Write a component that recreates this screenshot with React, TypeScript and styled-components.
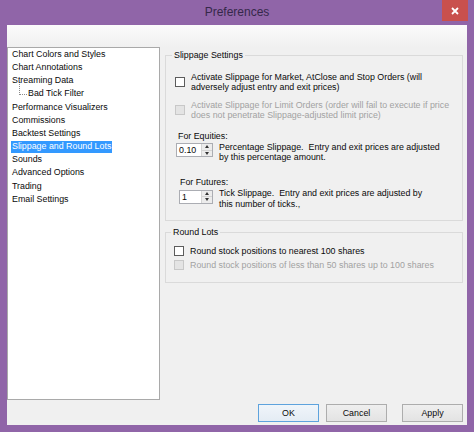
import styled, { createGlobalStyle } from "styled-components";

const GlobalStyle = createGlobalStyle`
  html, body {
    margin: 0;
    padding: 0;
    background: #9065a8;
  }
  body {
    width: 474px;
    height: 432px;
    overflow: hidden;
    font-family: "Liberation Sans", Arial, sans-serif;
    font-size: 8.85px;
    color: #0a0a0a;
  }
  #root {
    height: 100%;
  }
`;

const Window = styled.div`
  width: 474px;
  height: 432px;
  display: flex;
  flex-direction: column;
  background: #9065a8;
`;

const TitleBar = styled.div`
  height: 25px;
  flex: none;
  display: grid;
  grid-template-columns: 1fr auto 1fr;
  align-items: start;
`;

const Title = styled.div`
  grid-column: 2;
  font-size: 12px;
  line-height: 24px;
  color: #35284a;
`;

const CloseButton = styled.div`
  grid-column: 3;
  justify-self: end;
  margin-right: 6px;
  width: 26px;
  height: 21px;
  background: #c9504d;
  display: flex;
  align-items: center;
  justify-content: center;
`;

const Client = styled.div`
  flex: 1;
  margin: 0 7px 7px;
  padding-top: 22px;
  background: linear-gradient(#fbfbfb, #f0f0f0 22px);
  display: grid;
  grid-template-columns: 153px 1fr;
  grid-template-rows: 1fr 25px;
  min-height: 0;
`;

const ListBox = styled.div`
  background: #fff;
  border: 1px solid #a9a9a9;
  padding: 0 0 0 3px;
`;

const ListItem = styled.div<{ indent?: boolean }>`
  height: 13.2px;
  display: flex;
  align-items: center;
  padding-left: ${(p) => (p.indent ? "16px" : "0")};
  position: relative;
`;

const ItemLabel = styled.span<{ selected?: boolean }>`
  line-height: 11.6px;
  padding: 0 1px;
  white-space: nowrap;
  background: ${(p) => (p.selected ? "#3399ff" : "transparent")};
  color: ${(p) => (p.selected ? "#fff" : "#0a0a0a")};
`;

const TreeLine = styled.span`
  position: absolute;
  left: 8px;
  top: -4px;
  width: 7px;
  height: 10px;
  border-left: 1px dotted #8a8a8a;
  border-bottom: 1px dotted #8a8a8a;
`;

const Panel = styled.div`
  padding: 1.5px 4px 0 5px;
  display: flex;
  flex-direction: column;
`;

const GroupBox = styled.fieldset<{ pad: string }>`
  margin: 0;
  padding: ${(p) => p.pad};
  border: 1px solid #dadada;
  border-radius: 0;
  display: flex;
  flex-direction: column;
  min-width: 0;

  & + & {
    margin-top: 4.5px;
  }
`;

const Legend = styled.legend`
  margin-left: -3px;
  padding: 0 2px;
  line-height: 13px;
`;

const CheckRow = styled.label<{ gap?: number }>`
  display: flex;
  align-items: center;
  gap: 6px;
  margin-top: ${(p) => p.gap ?? 0}px;
  line-height: 10.3px;
`;

const Box = styled.span<{ disabled?: boolean }>`
  flex: none;
  width: 10px;
  height: 10px;
  box-sizing: border-box;
  border: 1px solid ${(p) => (p.disabled ? "#c8c8c8" : "#5c5c5c")};
  background: ${(p) => (p.disabled ? "#e4e4e4" : "#fff")};
`;

const CheckText = styled.span<{ disabled?: boolean }>`
  color: ${(p) => (p.disabled ? "#a2a2a2" : "#0a0a0a")};
`;

const SubLabel = styled.div<{ gap: number; indent: number }>`
  margin-top: ${(p) => p.gap}px;
  margin-left: ${(p) => p.indent}px;
  line-height: 10.3px;
`;

const SpinRow = styled.div<{ indent: number; gap: number }>`
  display: flex;
  align-items: flex-start;
  gap: 6px;
  margin-left: ${(p) => p.indent}px;
  margin-top: ${(p) => p.gap}px;
  line-height: 10.3px;
`;

const Spinner = styled.div<{ width: number }>`
  flex: none;
  margin-top: 1.4px;
  width: ${(p) => p.width}px;
  height: 14px;
  box-sizing: border-box;
  border: 1px solid #abadb3;
  background: #fff;
  display: flex;
`;

const SpinValue = styled.span`
  flex: 1;
  padding-left: 2px;
  line-height: 12px;
`;

const SpinButtons = styled.div`
  width: 10px;
  display: flex;
  flex-direction: column;
  border-left: 1px solid #d4d4d4;
  background: #ececec;
`;

const SpinHalf = styled.div<{ down?: boolean }>`
  flex: 1;
  display: flex;
  align-items: center;
  justify-content: center;
  border-top: ${(p) => (p.down ? "1px solid #d4d4d4" : "none")};

  &::after {
    content: "";
    border-left: 2.5px solid transparent;
    border-right: 2.5px solid transparent;
    ${(p) =>
      p.down
        ? "border-top: 3px solid #333;"
        : "border-bottom: 3px solid #333;"}
  }
`;

const Footer = styled.div`
  grid-column: 1 / -1;
  display: flex;
  justify-content: flex-end;
  align-items: flex-start;
  padding: 4px 4px 0 0;
`;

const Button = styled.button<{ primary?: boolean; spaced?: boolean }>`
  width: 61px;
  height: 17.5px;
  margin-left: ${(p) => (p.spaced ? "15px" : "7px")};
  padding: 0;
  font-family: inherit;
  font-size: 8.85px;
  color: #0a0a0a;
  border: 1px solid ${(p) => (p.primary ? "#5ea3dd" : "#adadad")};
  background: ${(p) =>
    p.primary
      ? "linear-gradient(#f0f5fa, #e4ecf4)"
      : "linear-gradient(#efefef, #e3e3e3)"};
  border-radius: 0;
`;

const menu = [
  "Chart Colors and Styles",
  "Chart Annotations",
  "Streaming Data",
  "Bad Tick Filter",
  "Performance Visualizers",
  "Commissions",
  "Backtest Settings",
  "Slippage and Round Lots",
  "Sounds",
  "Advanced Options",
  "Trading",
  "Email Settings",
];

export default function App() {
  return (
    <>
      <GlobalStyle />
      <Window>
        <TitleBar>
          <Title>Preferences</Title>
          <CloseButton>
            <svg width="8" height="8" viewBox="0 0 8 8">
              <path d="M1 1L7 7M7 1L1 7" stroke="#fff" strokeWidth="1.8" />
            </svg>
          </CloseButton>
        </TitleBar>
        <Client>
          <ListBox>
            {menu.map((m) => (
              <ListItem key={m} indent={m === "Bad Tick Filter"}>
                {m === "Bad Tick Filter" && <TreeLine />}
                <ItemLabel selected={m === "Slippage and Round Lots"}>{m}</ItemLabel>
              </ListItem>
            ))}
          </ListBox>
          <Panel>
            <GroupBox pad="10px 9px 11.5px 9px">
              <Legend>Slippage Settings</Legend>
              <CheckRow>
                <Box />
                <CheckText>
                  Activate Slippage for Market, AtClose and Stop Orders (will
                  <br />
                  adversely adjust entry and exit prices)
                </CheckText>
              </CheckRow>
              <CheckRow gap={7.8}>
                <Box disabled />
                <CheckText disabled>
                  Activate Slippage for Limit Orders (order will fail to execute if price
                  <br />
                  does not penetrate Slippage-adjusted limit price)
                </CheckText>
              </CheckRow>
              <SubLabel gap={11} indent={3}>For Equities:</SubLabel>
              <SpinRow indent={1} gap={0}>
                <Spinner width={37}>
                  <SpinValue>0.10</SpinValue>
                  <SpinButtons>
                    <SpinHalf />
                    <SpinHalf down />
                  </SpinButtons>
                </Spinner>
                <span>
                  Percentage Slippage.&nbsp; Entry and exit prices are adjusted
                  <br />
                  by this percentage amount.
                </span>
              </SpinRow>
              <SubLabel gap={14.2} indent={5}>For Futures:</SubLabel>
              <SpinRow indent={4} gap={1.4}>
                <Spinner width={34}>
                  <SpinValue>1</SpinValue>
                  <SpinButtons>
                    <SpinHalf />
                    <SpinHalf down />
                  </SpinButtons>
                </Spinner>
                <span>
                  Tick Slippage.&nbsp; Entry and exit prices are adjusted by
                  <br />
                  this number of ticks.,
                </span>
              </SpinRow>
            </GroupBox>
            <GroupBox pad="7px 9px 12px 8px">
              <Legend>Round Lots</Legend>
              <CheckRow>
                <Box />
                <CheckText>Round stock positions to nearest 100 shares</CheckText>
              </CheckRow>
              <CheckRow gap={3.4}>
                <Box disabled />
                <CheckText disabled>
                  Round stock positions of less than 50 shares up to 100 shares
                </CheckText>
              </CheckRow>
            </GroupBox>
          </Panel>
          <Footer>
            <Button primary>OK</Button>
            <Button>Cancel</Button>
            <Button spaced>Apply</Button>
          </Footer>
        </Client>
      </Window>
    </>
  );
}
